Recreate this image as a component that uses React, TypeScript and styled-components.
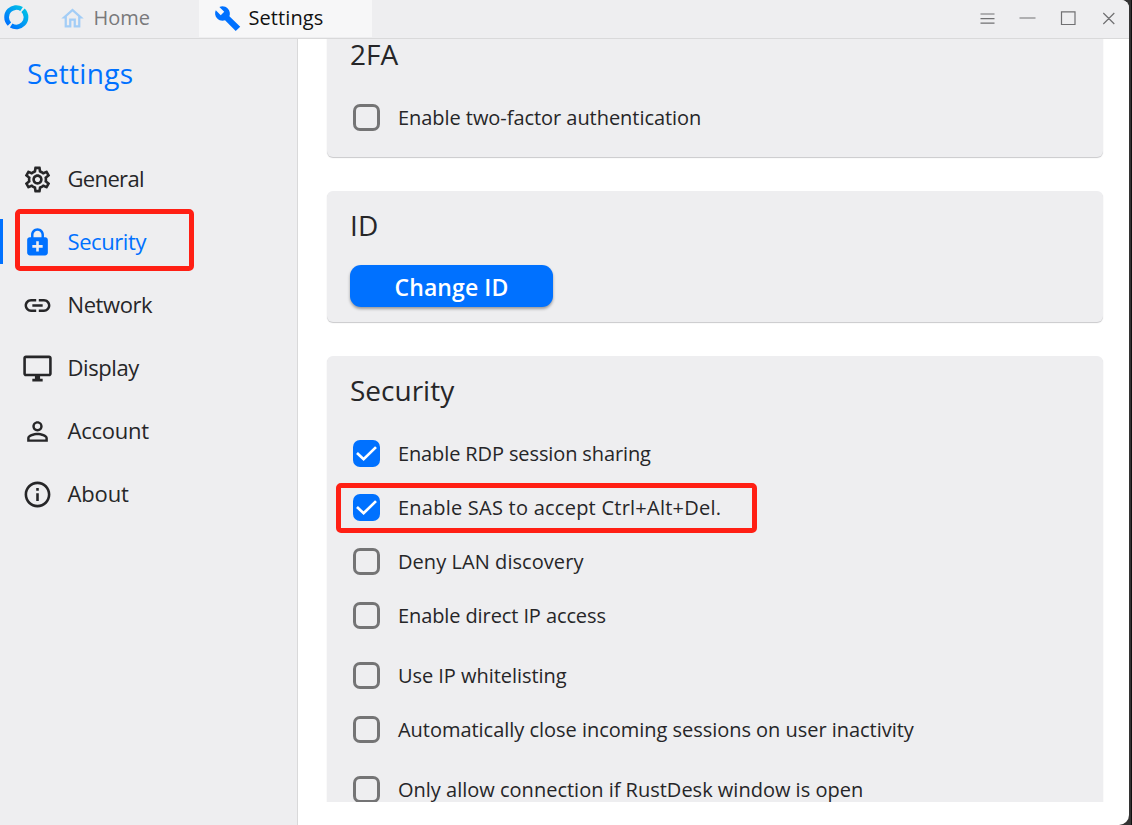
import React from "react";
import styled, { createGlobalStyle } from "styled-components";
import {
  MdOutlineHome,
  MdOutlineSettings,
  MdEnhancedEncryption,
  MdLink,
  MdOutlineDesktopWindows,
  MdPersonOutline,
  MdInfoOutline,
} from "react-icons/md";

const Global = createGlobalStyle`
  * { box-sizing: border-box; }
  body { margin: 0; background: #1d1d1d; overflow: hidden; font-family: "Open Sans", "Noto Sans", sans-serif; font-weight: 400; color: #262628; }
`;

const Backdrop = styled.div`
  width: 1132px;
  height: 825px;
  background: linear-gradient(to right, #333 0 1131px, #111 1131px);
`;
const Window = styled.div`
  width: 1129px;
  height: 825px;
  display: flex;
  flex-direction: column;
  overflow: hidden;
  background: #fff;
  border-radius: 0 8px 10px 0;
`;
const TitleBar = styled.header`
  height: 39px;
  flex: none;
  display: flex;
  background: #eeeef0;
  border-bottom: 1px solid #d9d9da;
`;
const LogoSlot = styled.div`
  width: 47px;
  padding: 5px 0 0 4px;
`;
const Tab = styled.div<{ $active?: boolean }>`
  display: flex;
  align-items: center;
  width: ${(p) => (p.$active ? 173 : 152)}px;
  height: ${(p) => (p.$active ? 37 : 36)}px;
  padding-left: ${(p) => (p.$active ? 15 : 12)}px;
  gap: 7.4px;
  background: ${(p) => (p.$active ? "#f7f7f8" : "transparent")};
  color: ${(p) => (p.$active ? "#111" : "#79797b")};
`;
const Text = styled.span<{ $size: number; $gap?: number }>`
  font-size: ${(p) => p.$size}px;
  letter-spacing: ${(p) => p.$gap ?? 0}px;
  line-height: 1.2;
  white-space: nowrap;
`;
const ActiveTabText = styled(Text)`
  padding-bottom: 1px;
`;
const NavText = styled(Text)`
  padding-bottom: 2px;
`;
const Controls = styled.div`
  margin-left: auto;
  padding-right: 13px;
  display: flex;
  align-items: center;
  height: 37px;
`;
const Body = styled.div`
  flex: 1;
  min-height: 0;
  display: flex;
`;
const Sidebar = styled.nav`
  width: 298px;
  flex: none;
  background: #eeeef0;
  border-right: 1px solid #d9d9da;
`;
const SidebarTitle = styled.h1`
  margin: 0;
  height: 109px;
  padding: 17px 0 0 27px;
  font-weight: inherit;
  line-height: 1;
  color: #0071ff;
`;
const Item = styled.div<{ $selected?: boolean }>`
  position: relative;
  height: 63px;
  display: flex;
  align-items: center;
  color: ${(p) => (p.$selected ? "#0071ff" : "#262628")};
`;
const Marker = styled.i<{ $on?: boolean }>`
  width: 3px;
  height: 45px;
  margin-bottom: 2px;
  background: ${(p) => (p.$on ? "#0071ff" : "transparent")};
`;
const IconSlot = styled.span`
  width: 64.5px;
  padding-left: 19px;
  margin-bottom: 1px;
  display: flex;
`;
const Highlight = styled.div<{ $x: number; $y: number; $w: number; $h: number }>`
  position: absolute;
  left: ${(p) => p.$x}px;
  top: ${(p) => p.$y}px;
  width: ${(p) => p.$w}px;
  height: ${(p) => p.$h}px;
  border: 5px solid #ff1f14;
  border-radius: 5px;
`;
const Content = styled.main`
  height: 763px;
  width: 831px;
  padding-left: 29px;
  overflow: hidden;
`;
const Card = styled.section<{ $h: number; $first?: boolean }>`
  width: 776px;
  height: ${(p) => p.$h}px;
  margin: ${(p) => (p.$first ? -18 : 34)}px 0 0 0.4px;
  padding: 16px 22.6px 0;
  background: #eeeef0;
  border-radius: 6px;
  box-shadow: 0 1px 1px #c9c9cb;
`;
const CardTitle = styled.h2<{ $drop?: number; $after?: number }>`
  margin: 0 0 ${(p) => p.$after ?? 0}px;
  height: 36px;
  padding-top: ${(p) => p.$drop ?? 0}px;
  font-weight: inherit;
  display: flex;
  align-items: center;
`;
const Button = styled.button`
  width: 203px;
  height: 42px;
  padding: 4px 0 0;
  display: block;
  border: 0;
  border-radius: 11px;
  background: #0071ff;
  color: #fff;
  font-family: inherit;
  font-weight: 600;
  box-shadow: 0 2px 3px rgba(0, 0, 0, 0.35);
`;
const Row = styled.label<{ $top?: number }>`
  position: relative;
  height: 54px;
  margin-top: ${(p) => p.$top ?? 0}px;
  padding-left: 3px;
  display: flex;
  align-items: center;
  gap: 18px;
`;
const Box = styled.span<{ $checked?: boolean }>`
  width: 27px;
  height: 27px;
  margin-bottom: 1px;
  display: flex;
  align-items: center;
  justify-content: center;
  border-radius: 7px;
  border: ${(p) => (p.$checked ? "0" : "3px solid #747475")};
  background: ${(p) => (p.$checked ? "#0071ff" : "transparent")};
`;

const Logo = () => (
  <svg width="25" height="25" viewBox="0 0 25 25" fill="none">
    <defs>
      <linearGradient id="ring" x1="0" y1="12.5" x2="25" y2="12.5" gradientUnits="userSpaceOnUse">
        <stop offset="0" stopColor="#0070ff" />
        <stop offset="1" stopColor="#00c3e6" />
      </linearGradient>
    </defs>
    <circle
      cx="12.3"
      cy="12.2"
      r="9.7"
      stroke="url(#ring)"
      strokeWidth="4.7"
      strokeDasharray="28.2 2.273"
      transform="rotate(-46 12.3 12.2)"
    />
  </svg>
);

const Wrench = () => (
  <svg width="27" height="27" viewBox="0 0 24 24" fill="#0071ff">
    <path d="M23.3 19.4 13.7 9.9c.9-2.3.4-5-1.5-6.9-2-2-5-2.4-7.4-1.3L9.1 6 6 9 1.6 4.7C.4 7.1.9 10.1 2.9 12.1c1.9 1.9 4.6 2.4 6.9 1.5l9.5 9.6z" />
  </svg>
);

const rows: { text: string; gap: number; on?: boolean; top?: number; mark?: boolean }[] = [
  { text: "Enable RDP session sharing", gap: -0.12, on: true },
  { text: "Enable SAS to accept Ctrl+Alt+Del.", gap: 0.24, on: true, mark: true },
  { text: "Deny LAN discovery", gap: 0.06 },
  { text: "Enable direct IP access", gap: -0.1 },
  { text: "Use IP whitelisting", gap: -0.05, top: 6 },
  { text: "Automatically close incoming sessions on user inactivity", gap: -0.03 },
  { text: "Only allow connection if RustDesk window is open", gap: 0, top: 6 },
];

const Option = ({ text, gap, on, top, mark }: (typeof rows)[number]) => (
  <Row $top={top}>
    <Box $checked={on}>
      {on && (
        <svg width="27" height="27" viewBox="0 0 27 27" fill="none">
          <path d="m4 13.1 6.6 6.1L23 7.1" stroke="#fff" strokeWidth="2.7" />
        </svg>
      )}
    </Box>
    <Text $size={20} $gap={gap}>{text}</Text>
    {mark && <Highlight $x={-14} $y={1.6} $w={421} $h={50} />}
  </Row>
);

const nav = [
  { text: "General", Icon: MdOutlineSettings, gap: -0.65 },
  { text: "Security", Icon: MdEnhancedEncryption, gap: -0.42, on: true },
  { text: "Network", Icon: MdLink, gap: -0.42 },
  { text: "Display", Icon: MdOutlineDesktopWindows, gap: -0.4 },
  { text: "Account", Icon: MdPersonOutline, gap: -0.25 },
  { text: "About", Icon: MdInfoOutline, gap: -0.15 },
];

export default function App() {
  return (
    <>
      <Global />
      <Backdrop>
        <Window>
          <TitleBar>
            <LogoSlot><Logo /></LogoSlot>
            <Tab>
              <MdOutlineHome size={27} color="#a3cdf6" />
              <Text $size={20}>Home</Text>
            </Tab>
            <Tab $active>
              <Wrench />
              <ActiveTabText $size={20} $gap={0.1}>Settings</ActiveTabText>
            </Tab>
            <Controls>
              <svg width="137" height="37" viewBox="0 0 137 37" fill="none" stroke="#707072" strokeWidth="1.2">
                <path d="M1.5 14h14M1.5 18.6h14M1.5 23.2h14M40.5 18h16M82.5 11.8h13.5v12.7H82.5zM124.3 13l11 11M135.3 13l-11 11" />
              </svg>
            </Controls>
          </TitleBar>
          <Body>
            <Sidebar>
              <SidebarTitle><Text $size={28} $gap={0.33}>Settings</Text></SidebarTitle>
              {nav.map(({ text, Icon, on, gap }) => (
                <Item key={text} $selected={on}>
                  <Marker $on={on} />
                  <IconSlot><Icon size={31} /></IconSlot>
                  <NavText $size={22} $gap={gap}>{text}</NavText>
                  {on && <Highlight $x={15} $y={-2} $w={178.5} $h={62} />}
                </Item>
              ))}
            </Sidebar>
            <Content>
              <Card $h={136} $first>
                <CardTitle $after={18}><Text $size={28}>2FA</Text></CardTitle>
                <Option text="Enable two-factor authentication" gap={-0.05} />
              </Card>
              <Card $h={131}>
                <CardTitle $drop={2} $after={22}><Text $size={28} $gap={0.3}>ID</Text></CardTitle>
                <Button><Text $size={23} $gap={0.1}>Change ID</Text></Button>
              </Card>
              <Card $h={480}>
                <CardTitle $drop={2} $after={19}><Text $size={28}>Security</Text></CardTitle>
                {rows.map((r) => <Option key={r.text} {...r} />)}
              </Card>
            </Content>
          </Body>
        </Window>
      </Backdrop>
    </>
  );
}
